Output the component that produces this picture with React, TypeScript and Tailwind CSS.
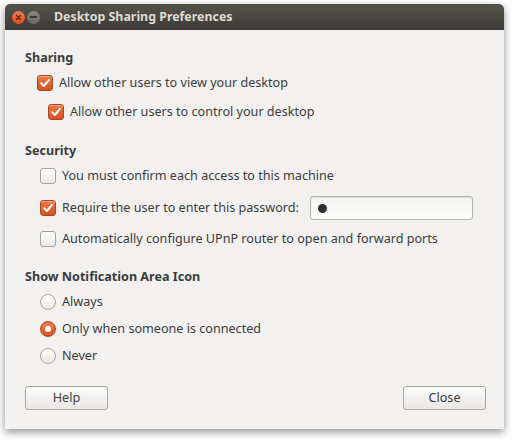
import React from 'react';

const font = { fontFamily: '"Noto Sans", "Open Sans", sans-serif' };

function Check({ checked }: { checked: boolean }) {
  if (checked) {
    return (
      <span className="flex h-4 w-4 shrink-0 items-center justify-center rounded-[3px] border border-[#a8461e] bg-gradient-to-b from-[#f07a4a] to-[#d4521f] shadow-[inset_0_1px_0_rgba(255,255,255,0.35)]">
        <svg width="12" height="12" viewBox="0 0 12 12">
          <path d="M2.2 6.3 L4.9 9 L9.9 2.8" fill="none" stroke="#fff" strokeWidth="2" strokeLinecap="round" strokeLinejoin="round" />
        </svg>
      </span>
    );
  }
  return (
    <span className="block h-4 w-4 shrink-0 rounded-[3px] border border-[#a7a39c] bg-gradient-to-b from-[#ffffff] to-[#ebe9e6]" />
  );
}

function Radio({ checked }: { checked: boolean }) {
  if (checked) {
    return (
      <span className="flex h-4 w-4 shrink-0 items-center justify-center rounded-full border border-[#a8461e] bg-gradient-to-b from-[#f07a4a] to-[#d4521f]">
        <span className="block h-[6px] w-[6px] rounded-full bg-white" />
      </span>
    );
  }
  return (
    <span className="block h-4 w-4 shrink-0 rounded-full border border-[#a7a39c] bg-gradient-to-b from-[#ffffff] to-[#ebe9e6]" />
  );
}

function Row({ children, className }: { children: React.ReactNode; className: string }) {
  return <div className={'flex h-5 items-center gap-[6px] whitespace-nowrap ' + className}>{children}</div>;
}

export default function App() {
  return (
    <div className="min-h-[440px] w-[515px] bg-white pl-[5px] pt-[4px]" style={font}>
      <div className="w-[499px] overflow-hidden rounded-t-[5px] shadow-[0_3px_8px_rgba(0,0,0,0.45)]">
        {/* title bar */}
        <div className="flex h-[26px] items-center bg-gradient-to-b from-[#55534c] to-[#3c3b37] pl-[7px]">
          <span className="flex h-[13px] w-[13px] items-center justify-center rounded-full bg-gradient-to-b from-[#f47a4e] to-[#df4b1a]">
            <svg width="7" height="7" viewBox="0 0 7 7">
              <path d="M1.5 1.5 L5.5 5.5 M5.5 1.5 L1.5 5.5" stroke="#5a2410" strokeWidth="1.2" strokeLinecap="round" />
            </svg>
          </span>
          <span className="ml-[2px] flex h-[13px] w-[13px] items-center justify-center rounded-full bg-gradient-to-b from-[#8a8781] to-[#6b6964]">
            <span className="block h-[1.5px] w-[7px] bg-[#3a3935]" />
          </span>
          <span className="ml-[14px] text-[12.4px] font-bold text-[#dfdbd2]">Desktop Sharing Preferences</span>
        </div>

        {/* body */}
        <div className="flex flex-col bg-[#f2f1f0] pl-[20px] pr-[18px] pt-[18px] pb-[19px] text-[12.6px] text-[#3c3c3c]">
          <Row className="font-bold">Sharing</Row>
          <Row className="mt-[5px] pl-[12px]">
            <Check checked />
            <span>Allow other users to view your desktop</span>
          </Row>
          <Row className="mt-[9px] pl-[23px]">
            <Check checked />
            <span>Allow other users to control your desktop</span>
          </Row>

          <Row className="mt-[19px] font-bold">Security</Row>
          <Row className="mt-[5px] pl-[15px]">
            <Check checked={false} />
            <span>You must confirm each access to this machine</span>
          </Row>
          <div className="mt-[10px] flex h-6 items-center gap-[6px] whitespace-nowrap pl-[15px]">
            <Check checked />
            <span>Require the user to enter this password:</span>
            <div className="ml-auto mr-[13px] flex h-6 w-[163px] shrink-0 items-center rounded-[3px] border border-[#b5b1aa] bg-gradient-to-b from-[#f4f4f3] to-[#fbfbfa] pl-[7px] shadow-[inset_0_1px_1px_rgba(0,0,0,0.08)]">
              <span className="block h-[9px] w-[9px] rounded-full bg-[#2e2e2e]" />
            </div>
          </div>
          <Row className="mt-[9px] pl-[15px]">
            <Check checked={false} />
            <span>Automatically configure UPnP router to open and forward ports</span>
          </Row>

          <Row className="mt-[18px] font-bold">Show Notification Area Icon</Row>
          <Row className="mt-[5px] pl-[15px]">
            <Radio checked={false} />
            <span>Always</span>
          </Row>
          <Row className="mt-[7px] pl-[15px]">
            <Radio checked />
            <span>Only when someone is connected</span>
          </Row>
          <Row className="mt-[7px] pl-[15px]">
            <Radio checked={false} />
            <span>Never</span>
          </Row>

          <div className="mt-[20px] flex items-center justify-between">
            <button className="h-6 w-[83px] rounded-[3px] border border-[#a9a59e] bg-gradient-to-b from-[#fcfcfc] to-[#e9e7e4] text-[12.6px] text-[#3c3c3c]">
              Help
            </button>
            <button className="h-6 w-[83px] rounded-[3px] border border-[#a9a59e] bg-gradient-to-b from-[#fcfcfc] to-[#e9e7e4] text-[12.6px] text-[#3c3c3c]">
              Close
            </button>
          </div>
        </div>
      </div>
    </div>
  );
}
